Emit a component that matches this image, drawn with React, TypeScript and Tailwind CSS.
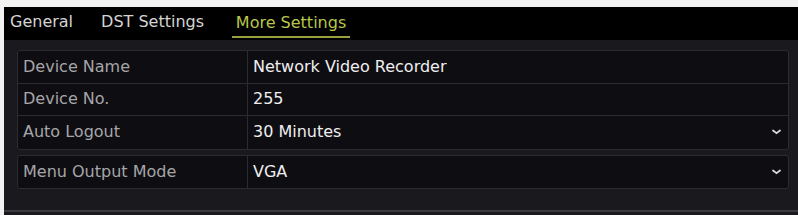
import React from 'react';

const rowsTop = [
  { label: 'Device Name', value: 'Network Video Recorder', select: false },
  { label: 'Device No.', value: '255', select: false },
  { label: 'Auto Logout', value: '30 Minutes', select: true },
];

function Chevron() {
  return (
    <svg width="9" height="6" viewBox="0 0 9 6" className="shrink-0">
      <path d="M1 1.5 L4.5 4.2 L8 1.5" fill="none" stroke="#d8d8d8" strokeWidth="1.8" strokeLinecap="round" />
    </svg>
  );
}

function Row({ label, value, select, last }: { label: string; value: string; select: boolean; last?: boolean }) {
  return (
    <div className={`flex h-[32.5px] ${last ? '' : 'border-b border-[#2c2b31]'}`}>
      <div className="w-[230px] flex items-center pl-[5px] border-r border-[#2c2b31] text-[#a6a6a8]">{label}</div>
      <div className="flex-1 flex items-center justify-between pl-[5px] pr-[7px] text-[#efefef]">
        <span>{value}</span>
        {select && <Chevron />}
      </div>
    </div>
  );
}

export default function App() {
  return (
    <div
      className="w-[798px] h-[215px] bg-[#f2f2f2] pt-[7px] pl-[4px] overflow-hidden"
      style={{ fontFamily: '"DejaVu Sans", "Liberation Sans", sans-serif' }}
    >
      <div className="h-[208px] flex flex-col bg-[#1a191e]">
        <div className="h-[33px] bg-black flex items-end gap-[28px] pl-[6px] text-[16px] shrink-0">
          <div className="pb-[6px] text-[#d4d4d4]">General</div>
          <div className="pb-[6px] text-[#d4d4d4]">DST Settings</div>
          <div className="flex flex-col items-center">
            <div className="text-[#b9c64c] px-[1px]">More Settings</div>
            <div className="h-[2px] w-[118px] bg-[#9aa03e] mt-[1px] mb-[2px]" />
          </div>
        </div>
        <div className="flex-1 pl-[13px] pr-[9px] pt-[10px] text-[16px]">
          <div className="border border-[#2c2b31] rounded-[3px] bg-[#0e0d12]">
            {rowsTop.map((r, i) => (
              <Row key={r.label} {...r} last={i === rowsTop.length - 1} />
            ))}
          </div>
          <div className="mt-[5px] border border-[#2c2b31] rounded-[3px] bg-[#0e0d12]">
            <Row label="Menu Output Mode" value="VGA" select last />
          </div>
        </div>
        <div className="h-[2px] bg-[#3a393e] shrink-0" />
        <div className="h-[3px] bg-[#1a191e] shrink-0" />
      </div>
    </div>
  );
}
